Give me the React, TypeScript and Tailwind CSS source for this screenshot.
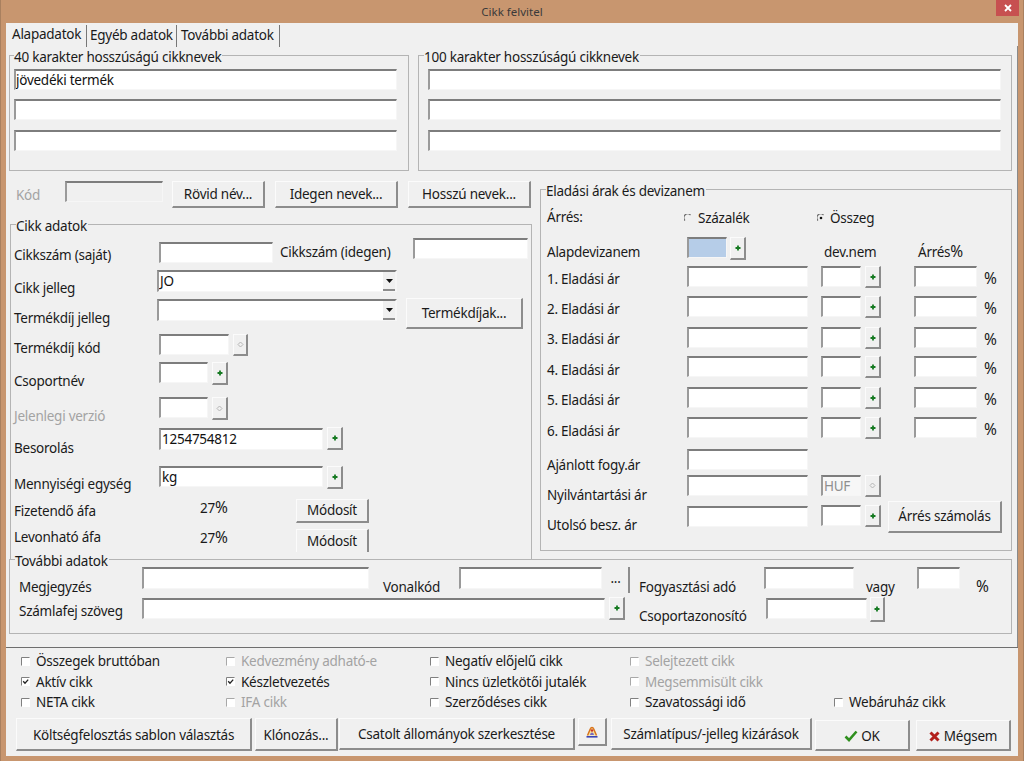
import React from 'react'

type P = { className?: string; children?: React.ReactNode }

function Input({ className = '', bg = 'bg-white', color = 'text-[#111]', children }: P & { bg?: string; color?: string }) {
  return (
    <div className={`shrink-0 border-t-2 border-t-[#7d7d7d] border-l-2 border-l-[#9a9a9a] border-r border-r-[#f6f6f6] border-b border-b-[#f6f6f6] pl-[1px] leading-[18px] overflow-hidden ${bg} ${color} ${className}`}>
      {children}
    </div>
  )
}

function Btn({ className = '', children }: P) {
  return (
    <div className={`shrink-0 flex items-center justify-center bg-[#f0f0f0] border-t border-t-[#fbfbfb] border-l border-l-[#fbfbfb] border-r-2 border-r-[#8c8c8c] whitespace-nowrap ${className}`}>
      {children}
    </div>
  )
}

function Plus() {
  return (
    <svg width="6" height="6" viewBox="0 0 6 6">
      <path d="M3 0.5v5M0.5 3h5" stroke="#167a22" strokeWidth="1.8" />
    </svg>
  )
}

function Diamond() {
  return (
    <svg width="7" height="7" viewBox="0 0 7 7">
      <path d="M3.5 1 6 3.5 3.5 6 1 3.5Z" fill="none" stroke="#b5b5b5" strokeWidth="1" />
    </svg>
  )
}

function PlusBtn({ className = '' }: P) {
  return <Btn className={`border-b-2 border-b-[#8c8c8c] ${className}`}><Plus /></Btn>
}

function OffBtn({ className = '' }: P) {
  return <Btn className={`border-b-2 border-b-[#8c8c8c] ${className}`}><Diamond /></Btn>
}

function TextBtn({ className = '', children }: P) {
  return <Btn className={`border-b-2 border-b-[#8c8c8c] ${className}`}>{children}</Btn>
}

function Label({ className = '', children }: P) {
  return <div className={`shrink-0 leading-[18px] whitespace-nowrap ${className}`}>{children}</div>
}

function Pct() {
  return <span className="text-[15.5px] tracking-normal leading-none">%</span>
}

function Group({ title, titleAt = 'left-[5px]', className = '', children }: P & { title: string; titleAt?: string }) {
  return (
    <div className={`relative shrink-0 border border-[#b4b4b4] ${className}`}>
      <div className={`absolute top-[-8px] bg-[#f0f0f0] pr-[1px] leading-[18px] whitespace-nowrap ${titleAt}`}>{title}</div>
      {children}
    </div>
  )
}

function Combo({ className = '', children }: P) {
  return (
    <Input className={`relative border-t-[#6f6f6f] border-r-2 border-r-[#9a9a9a] ${className}`}>
      {children}
      <div className="absolute right-0 top-0 w-[12px] h-[19px] bg-[#f0f0f0] border-b-2 border-b-[#8c8c8c] flex items-center justify-center">
        <svg width="7" height="4" viewBox="0 0 7 4"><path d="M0 0h7L3.5 4Z" fill="#111" /></svg>
      </div>
    </Input>
  )
}

function Check({ label, checked, off }: { label?: string; checked?: boolean; off?: boolean }) {
  if (!label) return <div />
  return (
    <div className={`flex items-center leading-[18px] whitespace-nowrap ${off ? 'text-[#a3a3a3]' : ''}`}>
      <svg width="9" height="9" viewBox="0 0 9 9" className="mr-[6px] shrink-0">
        <rect x="1" y="1" width="8" height="8" fill="#fff" />
        <path d="M0.5 8.5v-8h8" fill="none" stroke={off ? '#a8a8a8' : '#808080'} strokeWidth="1" />
        {checked && <path d="M2.2 4.2 4 6.2 7.2 2.6" fill="none" stroke="#222" strokeWidth="1.3" />}
      </svg>
      {label}
    </div>
  )
}

function Radio({ on }: { on?: boolean }) {
  return (
    <svg width="8" height="8" viewBox="0 0 8 8" className="shrink-0">
      <path d="M1 6.5A3.6 3.6 0 0 1 6.5 1" fill="none" stroke="#6a6a6a" strokeWidth="1.1" />
      {on && <circle cx="4" cy="4" r="1.3" fill="#111" />}
    </svg>
  )
}

const priceRows = [
  { n: '1. Eladási ár', row: 'h-[30px]', lab: 'mt-[4px]' },
  { n: '2. Eladási ár', row: 'h-[31px]', lab: 'mt-[4px]' },
  { n: '3. Eladási ár', row: 'h-[29px]', lab: 'mt-[3px]' },
  { n: '4. Eladási ár', row: 'h-[31px]', lab: 'mt-[5px]' },
  { n: '5. Eladási ár', row: 'h-[30px]', lab: 'mt-[4px]' },
  { n: '6. Eladási ár', row: 'h-[32px]', lab: 'mt-[5px]' },
]

export default function App() {
  return (
    <div className="w-[1024px] h-[761px] overflow-hidden bg-[#c8966f] border-l border-r border-[#a9805f] px-[5px] text-[13.5px] tracking-[-0.25px] text-[#1a1a1a] font-['Noto_Sans',sans-serif]">
      {/* title bar */}
      <div className="relative h-[23px] flex items-center justify-center text-[11.5px] tracking-normal text-[#3a3a3a]">
        Cikk felvitel
        <div className="absolute right-[-1px] top-0 w-[23px] h-[16px] bg-[#c75050] flex items-center justify-center">
          <svg width="8" height="8" viewBox="0 0 8 8"><path d="M1 1l6 6M7 1l-6 6" stroke="#fff" strokeWidth="1.8" /></svg>
        </div>
      </div>

      <div className="relative w-[1012px] h-[733px] bg-[#f0f0f0] flex flex-col">
        {/* pane edge on the right */}
        <div className="absolute right-0 top-[23px] w-[1px] h-[601px] bg-[#8a8a8a]" />

        {/* tabs */}
        <div className="h-[32px] shrink-0 flex items-start pl-[6px] pt-[2px]">
          <div className="w-[74px] h-[20px] leading-[18px]">Alapadatok</div>
          <div className="w-[91px] h-[22px] pl-[3px] border-l border-r border-[#777] leading-[20px]">Egyéb adatok</div>
          <div className="w-[103px] h-[22px] pl-[4px] border-r border-[#777] leading-[20px]">További adatok</div>
        </div>

        {/* names */}
        <div className="h-[116px] shrink-0 flex items-start pl-[3px]">
          <Group title="40 karakter hosszúságú cikknevek" titleAt="left-[4px]" className="w-[400px] h-[116px] pl-[4px] pt-[13px]">
            <Input className="w-[383px] h-[21px]"><span className="-ml-[1px]">jövedéki termék</span></Input>
            <Input className="w-[383px] h-[21px] mt-[9px]" />
            <Input className="w-[383px] h-[21px] mt-[10px]" />
          </Group>
          <Group title="100 karakter hosszúságú cikknevek" className="w-[594px] h-[116px] ml-[9px] pl-[9px] pt-[13px]">
            <Input className="w-[573px] h-[21px]" />
            <Input className="w-[573px] h-[21px] mt-[9px]" />
            <Input className="w-[573px] h-[21px] mt-[10px]" />
          </Group>
        </div>

        <div className="h-[388px] shrink-0 flex items-start">
          {/* left column */}
          <div className="w-[534px] shrink-0">
            <div className="h-[27px] mt-[10px] flex items-start pl-[10px]">
              <Label className="w-[49px] mt-[5px] text-[#a3a3a3]">Kód</Label>
              <Input className="w-[98px] h-[21px]" bg="bg-[#f0f0f0]" />
              <TextBtn className="w-[93px] h-[27px] ml-[9px] pt-[1px]">Rövid név...</TextBtn>
              <TextBtn className="w-[123px] h-[27px] ml-[10px] pt-[1px]">Idegen nevek...</TextBtn>
              <TextBtn className="w-[123px] h-[27px] ml-[10px] pt-[1px]">Hosszú nevek...</TextBtn>
            </div>

            <Group title="Cikk adatok" className="w-[522px] h-[335px] ml-[4px] mt-[16px] pt-[13px] pl-[3px] border-b-0">
              <div className="h-[32px] flex items-start">
                <Label className="w-[145px] mt-[8px]">Cikkszám (saját)</Label>
                <Input className="w-[114px] h-[21px] mt-[4px]" />
                <Label className="w-[133px] ml-[7px] mt-[5px]">Cikkszám (idegen)</Label>
                <Input className="w-[115px] h-[21px]" />
              </div>
              <div className="h-[28px] flex items-start">
                <Label className="w-[143px] mt-[9px]">Cikk jelleg</Label>
                <Combo className="w-[240px] h-[22px]">JO</Combo>
              </div>
              <div className="h-[36px] flex items-start">
                <Label className="w-[143px] mt-[11px]">Termékdíj jelleg</Label>
                <Combo className="w-[240px] h-[22px] mt-[1px]" />
                <TextBtn className="w-[117px] h-[31px] ml-[9px]">Termékdíjak...</TextBtn>
              </div>
              <div className="h-[28px] flex items-start">
                <Label className="w-[145px] mt-[5px]">Termékdíj kód</Label>
                <Input className="w-[70px] h-[21px]" />
                <OffBtn className="w-[15px] h-[22px] ml-[4px]" />
              </div>
              <div className="h-[35px] flex items-start">
                <Label className="w-[145px] mt-[10px]">Csoportnév</Label>
                <Input className="w-[49px] h-[21px]" />
                <PlusBtn className="w-[16px] h-[23px] ml-[4px]" />
              </div>
              <div className="h-[30px] flex items-start">
                <Label className="w-[145px] mt-[10px] text-[#a3a3a3]">Jelenlegi verzió</Label>
                <Input className="w-[49px] h-[21px]" />
                <OffBtn className="w-[16px] h-[23px] ml-[4px]" />
              </div>
              <div className="h-[39px] flex items-start">
                <Label className="w-[145px] mt-[12px]">Besorolás</Label>
                <Input className="w-[164px] h-[22px] mt-[1px]">1254754812</Input>
                <PlusBtn className="w-[16px] h-[23px] ml-[4px]" />
              </div>
              <div className="h-[33px] flex items-start">
                <Label className="w-[145px] mt-[9px]">Mennyiségi egység</Label>
                <Input className="w-[164px] h-[21px]">kg</Input>
                <PlusBtn className="w-[16px] h-[23px] ml-[4px]" />
              </div>
              <div className="h-[30px] flex items-start">
                <Label className="w-[186px] mt-[3px]">Fizetendő áfa</Label>
                <Label className="w-[96px]">27<Pct /></Label>
                <TextBtn className="w-[73px] h-[24px]">Módosít</TextBtn>
              </div>
              <div className="h-[30px] flex items-start">
                <Label className="w-[186px] -mt-[1px]">Levonható áfa</Label>
                <Label className="w-[96px]">27<Pct /></Label>
                <Btn className="w-[73px] h-[23px]">Módosít</Btn>
              </div>
            </Group>
          </div>

          {/* right column */}
          <Group title="Eladási árak és devizanem" className="w-[472px] h-[362px] mt-[18px] pl-[6px] pt-[18px]">
            <div className="h-[29px] flex items-start">
              <Label className="w-[137px]">Árrés:</Label>
              <div className="w-[133px] flex items-center gap-[6px] mt-[1px]"><Radio /><Label>Százalék</Label></div>
              <div className="flex items-center gap-[5px] mt-[1px]"><Radio on /><Label>Összeg</Label></div>
            </div>
            <div className="h-[29px] flex items-start">
              <Label className="w-[140px] mt-[6px]">Alapdevizanem</Label>
              <Input className="w-[40px] h-[21px]" bg="bg-[#b6cde8]" />
              <PlusBtn className="w-[16px] h-[23px] ml-[3px]" />
              <Label className="w-[94px] ml-[78px] mt-[6px]">dev.nem</Label>
              <Label className="mt-[6px]">Árrés<Pct /></Label>
            </div>
            {priceRows.map((r) => (
              <div key={r.n} className={`flex items-start ${r.row}`}>
                <Label className={`w-[140px] ${r.lab}`}>{r.n}</Label>
                <Input className="w-[121px] h-[21px]" />
                <Input className="w-[40px] h-[21px] ml-[13px]" />
                <PlusBtn className="w-[16px] h-[22px] ml-[4px]" />
                <Input className="w-[63px] h-[21px] ml-[33px]" />
                <Label className="ml-[7px] mt-[4px]"><Pct /></Label>
              </div>
            ))}
            <div className="h-[26px] flex items-start">
              <Label className="w-[140px] mt-[7px]">Ajánlott fogy.ár</Label>
              <Input className="w-[121px] h-[21px]" />
            </div>
            <div className="h-[26px] flex items-start">
              <Label className="w-[140px] mt-[11px]">Nyilvántartási ár</Label>
              <Input className="w-[121px] h-[21px]" />
              <Input className="w-[40px] h-[21px] ml-[13px]" bg="bg-[#f7f7f7]" color="text-[#8f8f8f]">HUF</Input>
              <OffBtn className="w-[16px] h-[22px] ml-[4px]" />
            </div>
            <div className="h-[33px] flex items-start">
              <Label className="w-[140px] mt-[15px]">Utolsó besz. ár</Label>
              <Input className="w-[121px] h-[21px] mt-[5px]" />
              <Input className="w-[40px] h-[21px] ml-[13px] mt-[4px]" />
              <PlusBtn className="w-[16px] h-[22px] ml-[4px] mt-[4px]" />
              <TextBtn className="w-[114px] h-[32px] ml-[7px]">Árrés számolás</TextBtn>
            </div>
          </Group>
        </div>

        {/* további adatok */}
        <div className="shrink-0 pl-[3px]">
          <Group title="További adatok" className="w-[1003px] h-[75px] pl-[9px] pt-[7px]">
            <div className="h-[30px] flex items-start">
              <Label className="w-[123px] mt-[11px]">Megjegyzés</Label>
              <Input className="w-[227px] h-[22px]" />
              <Label className="w-[76px] ml-[14px] mt-[11px]">Vonalkód</Label>
              <Input className="w-[143px] h-[22px]" />
              <div className="w-[27px] h-[26px] ml-[1px] border-r-2 border-r-[#8c8c8c] text-center leading-[22px]">...</div>
              <Label className="w-[125px] ml-[9px] mt-[11px]">Fogyasztási adó</Label>
              <Input className="w-[90px] h-[22px]" />
              <Label className="w-[51px] ml-[12px] mt-[11px]">vagy</Label>
              <Input className="w-[43px] h-[22px]" />
              <Label className="ml-[16px] mt-[11px]"><Pct /></Label>
            </div>
            <div className="h-[30px] flex items-start">
              <Label className="w-[123px] mt-[5px]">Számlafej szöveg</Label>
              <Input className="w-[463px] h-[21px] mt-[1px]" />
              <PlusBtn className="w-[16px] h-[23px] ml-[4px]" />
              <Label className="w-[127px] ml-[14px] mt-[10px]">Csoportazonosító</Label>
              <Input className="w-[101px] h-[21px] mt-[1px]" />
              <PlusBtn className="w-[15px] h-[25px] ml-[3px]" />
            </div>
          </Group>
        </div>

        <div className="h-[1px] shrink-0 mt-[13px] bg-[#6e6e6e]" />

        {/* checkboxes */}
        <div className="shrink-0 mt-[3px] pl-[15px] grid grid-cols-[205px_204px_200px_204px_1fr] grid-rows-[20px_21px_20px]">
          <Check label="Összegek bruttóban" />
          <Check label="Kedvezmény adható-e" off />
          <Check label="Negatív előjelű cikk" />
          <Check label="Selejtezett cikk" off />
          <Check />
          <Check label="Aktív cikk" checked />
          <Check label="Készletvezetés" checked />
          <Check label="Nincs üzletkötői jutalék" />
          <Check label="Megsemmisült cikk" off />
          <Check />
          <Check label="NETA cikk" />
          <Check label="IFA cikk" off />
          <Check label="Szerződéses cikk" />
          <Check label="Szavatossági idő" />
          <Check label="Webáruház cikk" />
        </div>

        {/* bottom buttons */}
        <div className="shrink-0 mt-[6px] flex items-start pl-[10px]">
          <TextBtn className="w-[236px] h-[33px] pt-[2px]">Költségfelosztás sablon választás</TextBtn>
          <TextBtn className="w-[83px] h-[33px] ml-[3px] pt-[2px]">Klónozás...</TextBtn>
          <TextBtn className="w-[236px] h-[32px] ml-[1px] pt-[1px]">Csatolt állományok szerkesztése</TextBtn>
          <TextBtn className="w-[29px] h-[28px] ml-[3px]">
            <svg width="14" height="14" viewBox="0 0 14 14">
              <path d="M2.5 10.5 5.5 3.5a1.6 1.6 0 0 1 3 0l3 7" fill="#f6e2a0" stroke="#d8741c" strokeWidth="1.5" />
              <circle cx="7" cy="5.5" r="1.2" fill="#c9302c" />
              <path d="M5 10c.4-2 1.2-2.6 2-2.6s1.6.6 2 2.6" fill="#7a6ac0" />
              <path d="M1.5 11.8h11" stroke="#3a45b5" strokeWidth="1.6" />
            </svg>
          </TextBtn>
          <TextBtn className="w-[201px] h-[32px] ml-[4px] pt-[1px]">Számlatípus/-jelleg kizárások</TextBtn>
          <TextBtn className="w-[95px] h-[31px] ml-[3px] mt-[2px] pt-[2px] gap-[3px]">
            <svg width="14" height="12" viewBox="0 0 14 12"><path d="M1.5 6.5 5 10 12.5 1.5" fill="none" stroke="#2f8f1e" strokeWidth="2.6" /></svg>
            OK
          </TextBtn>
          <TextBtn className="w-[95px] h-[31px] ml-[6px] mt-[2px] pt-[2px] gap-[4px]">
            <svg width="11" height="11" viewBox="0 0 11 11"><path d="M1.5 1.5l8 8M9.5 1.5l-8 8" stroke="#b3201c" strokeWidth="3" /></svg>
            Mégsem
          </TextBtn>
        </div>
      </div>
    </div>
  )
}
